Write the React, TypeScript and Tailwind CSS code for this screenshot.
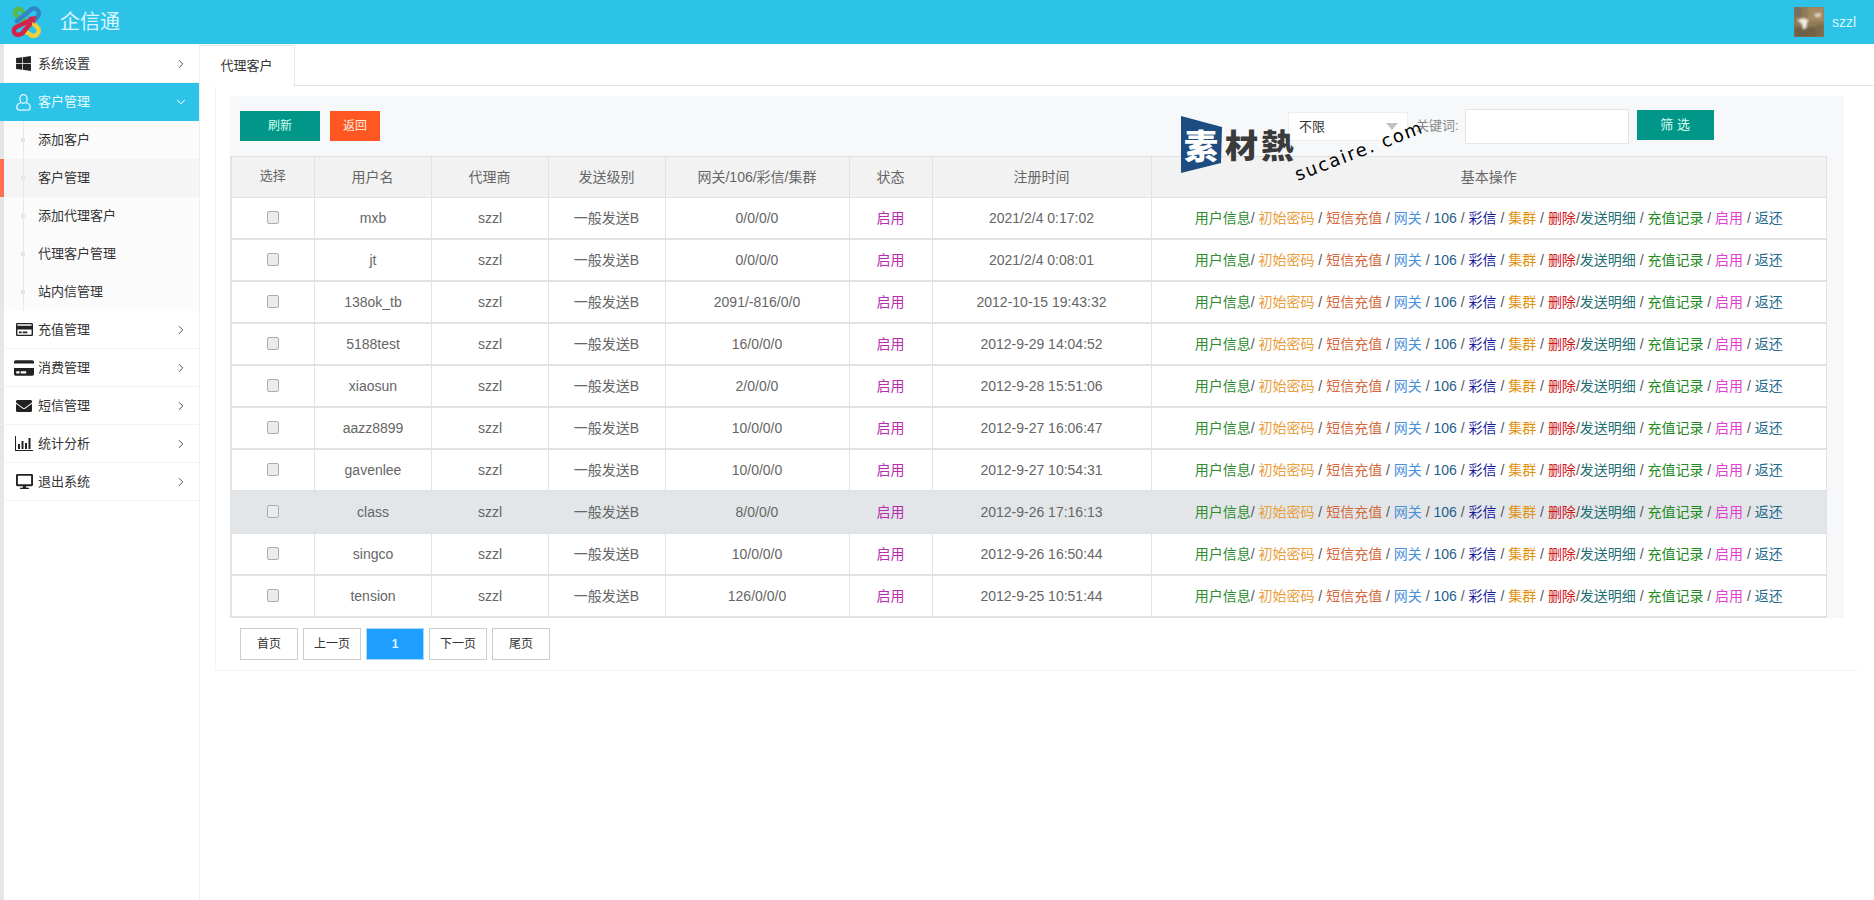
import { FaWindows, FaRegCreditCard, FaCreditCard, FaEnvelope, FaDesktop } from 'react-icons/fa';
import { ChevronRight, ChevronDown } from 'lucide-react';

const font = 'font-["Liberation_Sans","Noto_Sans_CJK_SC",sans-serif]';

const rows = [
  { name: 'mxb', channels: '0/0/0/0', time: '2021/2/4 0:17:02' },
  { name: 'jt', channels: '0/0/0/0', time: '2021/2/4 0:08:01' },
  { name: '138ok_tb', channels: '2091/-816/0/0', time: '2012-10-15 19:43:32' },
  { name: '5188test', channels: '16/0/0/0', time: '2012-9-29 14:04:52' },
  { name: 'xiaosun', channels: '2/0/0/0', time: '2012-9-28 15:51:06' },
  { name: 'aazz8899', channels: '10/0/0/0', time: '2012-9-27 16:06:47' },
  { name: 'gavenlee', channels: '10/0/0/0', time: '2012-9-27 10:54:31' },
  { name: 'class', channels: '8/0/0/0', time: '2012-9-26 17:16:13' },
  { name: 'singco', channels: '10/0/0/0', time: '2012-9-26 16:50:44' },
  { name: 'tension', channels: '126/0/0/0', time: '2012-9-25 10:51:44' },
];

const subMenu = ['添加客户', '客户管理', '添加代理客户', '代理客户管理', '站内信管理'];

function ChartIcon() {
  return (
    <svg width="18" height="15" viewBox="0 0 18 15" fill="#222">
      <rect x="0" y="0" width="1" height="15" />
      <rect x="0" y="14" width="18" height="1" />
      <rect x="3" y="8" width="2" height="5" />
      <rect x="6.500" y="5" width="2" height="8" />
      <rect x="10" y="7" width="2" height="6" />
      <rect x="13.500" y="2" width="2" height="11" />
    </svg>
  );
}

function UserIcon() {
  return (
    <svg width="15" height="17" viewBox="0 0 15 17" fill="none" stroke="#e6faff" strokeWidth="1.3">
      <ellipse cx="7.500" cy="5" rx="3.600" ry="4.300" />
      <path d="M5 8.500 C2 9.500 0.800 11 0.800 13 C0.800 15.200 2 16.200 4 16.200 L11 16.200 C13 16.200 14.200 15.200 14.200 13 C14.200 11 13 9.500 10 8.500" />
    </svg>
  );
}

const bottomMenu = [
  { label: '充值管理', icon: <FaRegCreditCard size={17} /> },
  { label: '消费管理', icon: <FaCreditCard size={20} /> },
  { label: '短信管理', icon: <FaEnvelope size={16} /> },
  { label: '统计分析', icon: <ChartIcon /> },
  { label: '退出系统', icon: <FaDesktop size={17} /> },
];

function Logo() {
  return (
    <svg width="32" height="32" viewBox="0 0 32 32" fill="none" strokeWidth="4.500" strokeLinecap="round">
      <path d="M20 20 L15 15 L6 9.500 A3.800 3.800 0 0 1 11.500 4 L16 8.500" stroke="#5cb947" />
      <path d="M7 15 L20 4.500 A4.500 4.500 0 0 1 28 10 L24 15" stroke="#2f86c9" />
      <path d="M15 25 L20 28.500 A4.500 4.500 0 0 0 27 21 L24 18" stroke="#f3cf3a" />
      <path d="M21 14 L5.500 21.500 A4.200 4.200 0 0 0 8 29 L12 27.500 L20 18" stroke="#d6234a" />
      <path d="M18 11 L26 10 L24.500 18 Z" fill="#d6234a" stroke="none" />
    </svg>
  );
}

function Avatar() {
  return (
    <svg width="30" height="30" viewBox="0 0 30 30" className="block">
      <defs>
        <filter id="soft">
          <feGaussianBlur stdDeviation="1" />
        </filter>
      </defs>
      <rect width="30" height="30" fill="#8f7a58" />
      <g filter="url(#soft)">
        <rect x="14" width="16" height="14" fill="#a5895f" />
        <rect y="20" width="30" height="10" fill="#6e6047" />
        <rect x="22" y="18" width="8" height="12" fill="#7d6a4e" />
        <rect y="0" width="8" height="10" fill="#77705c" />
        <path d="M3 13 L10 11 L14 13 L12 21 L9 22 L8 17 Z" fill="#f0f0e6" />
        <path d="M20 7 L27 6 L26 10 L22 10 Z" fill="#d9d8c8" />
      </g>
    </svg>
  );
}

function Watermark() {
  return (
    <div className="absolute left-[1181px] top-[116px] z-10 h-[60px] w-[245px]">
      <svg width="41" height="58" viewBox="0 0 41 58" className="absolute left-0 top-0">
        <polygon points="0,0 41,11 40,47 0,57" fill="#1c4c80" />
      </svg>
      <span className='absolute left-[3px] top-[9px] font-["Noto_Sans_CJK_SC",sans-serif] text-[34px] font-black leading-[40px] text-white'>素</span>
      <span className='absolute left-[44px] top-[8px] font-["Noto_Sans_CJK_SC",sans-serif] text-[33px] font-black leading-[40px] text-[#3b3b3b] tracking-[3px] whitespace-nowrap'>材熱</span>
      <span className='absolute left-[110px] top-[24px] origin-center -rotate-[21deg] font-["DejaVu_Sans",sans-serif] text-[18px] leading-[22px] tracking-[1.8px] text-black whitespace-nowrap'>
        sucaire. com
      </span>
    </div>
  );
}

function Ops() {
  return (
    <span className="whitespace-nowrap text-[#555]">
      <span className="text-[#2e8b2e]">用户信息</span>/ <span className="text-[#e8a040]">初始密码</span> /{' '}
      <span className="text-[#d2693c]">短信充值</span> / <span className="text-[#4a90d9]">网关</span> /{' '}
      <span className="text-[#1f5f8b]">106</span> / <span className="text-[#1a1a9c]">彩信</span> /{' '}
      <span className="text-[#e0930f]">集群</span> / <span className="text-[#d01515]">删除</span>/
      <span className="text-[#1f6f72]">发送明细</span> / <span className="text-[#228b22]">充值记录</span> /{' '}
      <span className="text-[#e03fd0]">启用</span> / <span className="text-[#1f6a8c]">返还</span>
    </span>
  );
}

export default function App() {
  return (
    <div className={`relative h-[900px] w-[1874px] overflow-hidden bg-white text-[13px] ${font}`}>
      {/* Header */}
      <div className="flex h-[44px] items-center bg-[#2dc3e8]">
        <div className="ml-[10px]"><Logo /></div>
        <span className="ml-[18px] text-[20px] text-[#d8f6ff]">企信通</span>
        <div className="ml-auto mr-[18px] flex items-center gap-[8px]">
          <Avatar />
          <span className="text-[14px] text-[#d8f6ff]">szzl</span>
        </div>
      </div>

      <div className="flex h-[856px]">
        {/* Sidebar */}
        <div className="flex w-[200px] flex-col border-r border-[#efefef] text-[#333]">
          <div className="flex h-[39px] items-center border-b border-l-4 border-b-[#f2f2f2] border-l-[#e6e6e6] pl-[11px] pt-px">
            <span className="flex w-[23px]"><FaWindows size={17} className="text-[#222]" /></span>
            <span>系统设置</span>
            <ChevronRight size={14} strokeWidth={1.5} className="ml-auto mr-[11px] text-[#333]" />
          </div>
          <div className="flex h-[38px] items-center bg-[#2dc3e8] pl-[16px] text-[#e6faff]">
            <span className="flex w-[22px]"><UserIcon /></span>
            <span>客户管理</span>
            <ChevronDown size={14} strokeWidth={1.8} className="ml-auto mr-[11px]" />
          </div>
          <div className="relative">
            <div className="absolute bottom-0 left-[23px] top-0 z-10 w-px bg-[#e9e9e9]" />
            {subMenu.map((label, i) => (
              <div
                key={label}
                className={`relative flex h-[38px] items-center border-l-4 pl-[34px] ${
                  i === 1 ? 'border-l-[#ff7050] bg-[#f5f5f5]' : 'border-l-[#e6e6e6] bg-[#fbfbfb]'
                }`}
              >
                <span className="absolute left-[17px] z-10 h-[4px] w-[4px] bg-[#e6e6e6]" />
                {label}
              </div>
            ))}
          </div>
          {bottomMenu.map((m) => (
            <div key={m.label} className="flex h-[38px] items-center border-b border-l-4 border-b-[#f2f2f2] border-l-[#e6e6e6] pl-[9px]">
              <span className="flex w-[25px] justify-center pr-[3px] text-[#222]">{m.icon}</span>
              <span>{m.label}</span>
              <ChevronRight size={14} strokeWidth={1.5} className="ml-auto mr-[11px] text-[#333]" />
            </div>
          ))}
          <div className="flex-1 border-l-4 border-l-[#e6e6e6]" />
        </div>

        {/* Main */}
        <div className="flex-1">
          <div className="flex h-[42px] border-b border-[#e4e4e4]">
            <div className="mt-px flex h-[41px] w-[95px] items-center justify-center border-r border-t border-[#e8e8e8] bg-white pr-px text-[#333]">
              代理客户
            </div>
          </div>

          <div className="ml-[15px] w-[1644px] border-b border-l border-[#f4f4f4] px-[14px] pb-[10px] pt-[10px]">
            <div className="w-[1614px] bg-[#f6f8fa]">
              <div className="flex h-[60px] text-[12px]">
                <button className="ml-[10px] mt-[15px] h-[30px] w-[80px] bg-[#009688] text-[#d7fff3]">刷新</button>
                <button className="ml-[10px] mt-[15px] h-[30px] w-[50px] bg-[#ff5722] text-[#fff0e0]">返回</button>
                <div className="relative ml-[908px] mt-[16px] h-[29px] w-[120px]">
                  <select className="h-full w-full appearance-none rounded-[2px] border border-[#eeeeee] bg-white pl-[10px] text-[13px] text-[#333]">
                    <option>不限</option>
                  </select>
                  <span className="absolute right-[10px] top-[11px] h-0 w-0 border-x-[6px] border-t-[7px] border-x-transparent border-t-[#c2c2c2]" />
                </div>
                <span className="ml-[8px] mt-[21px] text-[13px] leading-[18px] text-[#888]">关键词:</span>
                <input className="ml-[6px] mt-[13px] h-[35px] w-[164px] border border-[#e6e6e6] bg-white" />
                <button className="ml-[8px] mt-[14px] h-[30px] w-[77px] bg-[#009688] text-[13px] text-[#d7fff3]">筛 选</button>
              </div>

              <table className="w-[1597px] table-fixed border-collapse border-b-2 border-l-2 border-[#e2e2e2] text-center text-[14px] text-[#666]">
                <colgroup>
                  <col className="w-[83px]" />
                  <col className="w-[117px]" />
                  <col className="w-[117px]" />
                  <col className="w-[117px]" />
                  <col className="w-[184px]" />
                  <col className="w-[83px]" />
                  <col className="w-[219px]" />
                  <col />
                </colgroup>
                <thead>
                  <tr className="h-[41px] bg-[#f2f2f2]">
                    {['选择', '用户名', '代理商', '发送级别', '网关/106/彩信/集群', '状态', '注册时间', '基本操作'].map((h) => (
                      <th key={h} className={`border border-[#e2e2e2] font-normal ${h === '选择' ? 'pb-[3px] text-[13px]' : ''}`}>{h}</th>
                    ))}
                  </tr>
                </thead>
                <tbody className="bg-white">
                  {rows.map((r, i) => {
                    const td = 'border-r border-b-2 border-[#e2e2e2] p-0 pt-px';
                    return (
                      <tr key={r.name} className={`${i === 0 ? 'h-[41px]' : 'h-[42px]'} ${r.name === 'class' ? 'bg-[#e2e6e8]' : ''}`}>
                        <td className={td}>
                          <input
                            type="checkbox"
                            className="mb-[3px] inline-block h-[13px] w-[12px] appearance-none rounded-[2px] border border-[#adadad] bg-[#ebebeb] align-middle"
                          />
                        </td>
                        <td className={`${td} pl-px`}>{r.name}</td>
                        <td className={`${td} pl-px`}>szzl</td>
                        <td className={td}>一般发送B</td>
                        <td className={td}>{r.channels}</td>
                        <td className={`${td} text-[#b82cb0]`}>启用</td>
                        <td className={td}>{r.time}</td>
                        <td className={td}><Ops /></td>
                      </tr>
                    );
                  })}
                </tbody>
              </table>
            </div>

            <div className="ml-[10px] mt-[10px] flex gap-[5px] text-[12px] text-[#333]">
              {['首页', '上一页', '1', '下一页', '尾页'].map((p) => (
                <a
                  key={p}
                  className={`flex h-[32px] w-[58px] items-center justify-center border ${
                    p === '1' ? 'border-[#a9d8ff] bg-[#1e9fff] font-bold text-[#d8f6ff]' : 'border-[#cccccc] bg-white'
                  }`}
                >
                  {p}
                </a>
              ))}
            </div>
          </div>
        </div>
      </div>

      <Watermark />
    </div>
  );
}
